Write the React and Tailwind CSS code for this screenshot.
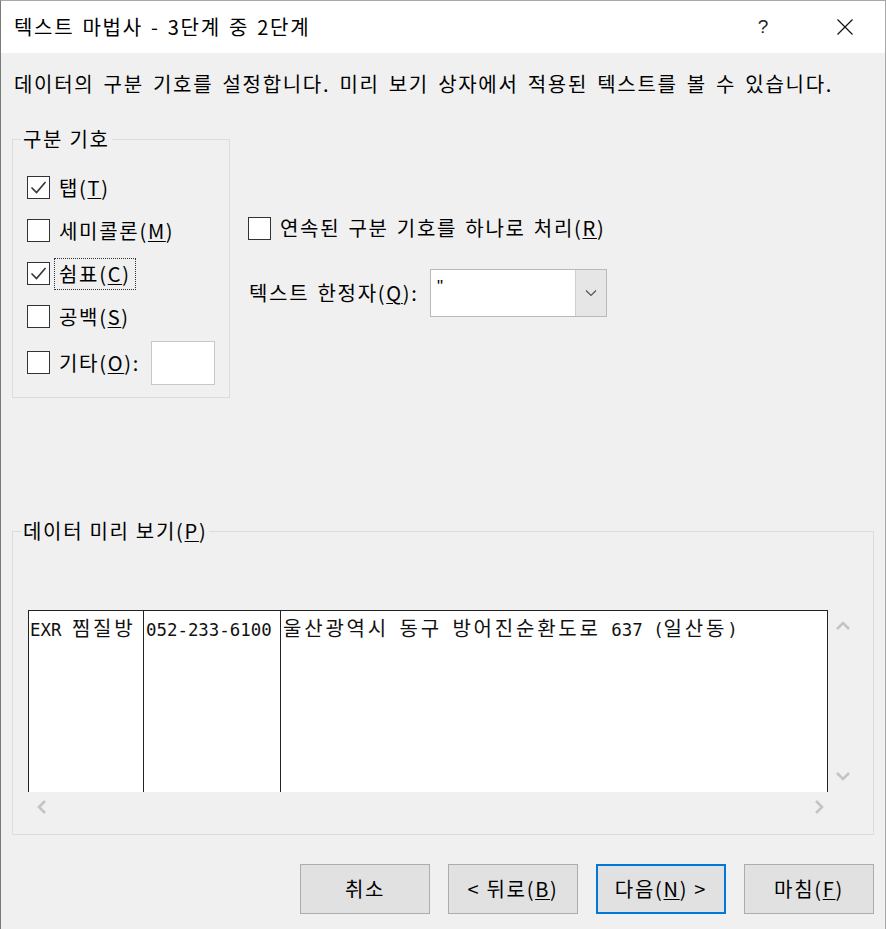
import React from 'react';

const Check = () => (
  <svg width="21" height="21" viewBox="0 0 21 21" className="block">
    <polyline points="3.5,10.5 8.5,15.5 17.5,5" fill="none" stroke="#333" strokeWidth="1.6" />
  </svg>
);

function CheckBox({ checked }) {
  return (
    <div className="w-[23px] h-[23px] border border-[#333] bg-white flex items-center justify-center shrink-0">
      {checked && <Check />}
    </div>
  );
}

function Key({ children }) {
  return <span className="underline underline-offset-[2px] decoration-1">{children}</span>;
}

function Row({ checked, children, className = '' }) {
  return (
    <div className={`flex items-center gap-[9px] ${className}`}>
      <CheckBox checked={checked} />
      <div className="leading-[24px] whitespace-nowrap">{children}</div>
    </div>
  );
}

function Chevron({ dir }) {
  const paths = {
    up: 'M1 9 L7 3 L13 9',
    down: 'M1 3 L7 9 L13 3',
    left: 'M9 1 L3 7 L9 13',
    right: 'M3 1 L9 7 L3 13',
  };
  return (
    <svg width="14" height="14" viewBox="0 0 14 14" className="block">
      <path d={paths[dir]} fill="none" stroke="#c4c4c4" strokeWidth="2.6" />
    </svg>
  );
}

// preview cells use a fixed-pitch look: ascii half width, hangul full width
function Mono({ text }) {
  const parts = text.match(/[\uac00-\ud7a3]+|[^\uac00-\ud7a3]+/g) || [];
  return parts.map((p, i) =>
    /[\uac00-\ud7a3]/.test(p) ? (
      <span key={i} className="font-['Noto_Sans_CJK_KR',sans-serif] text-[20px] tracking-[2.8px]">{p}</span>
    ) : (
      <span key={i} className="font-['DejaVu_Sans_Mono',monospace] text-[17.4px] tracking-[0px] whitespace-pre">{p}</span>
    )
  );
}

export default function App() {
  return (
    <div className="w-[886px] h-[929px] bg-[#f0f0f0] border-t border-l border-r border-t-[#a8a8a8] border-l-[#7a7a7a] border-r-[#a8a8a8] font-['Noto_Sans_CJK_KR',sans-serif] text-[20px] tracking-[1.7px] text-black flex flex-col overflow-hidden">
      {/* title bar */}
      <div className="h-[52px] bg-white flex items-center shrink-0">
        <div className="pl-[13px] leading-[24px] whitespace-nowrap [word-spacing:2px]">텍스트 마법사 - 3단계 중 2단계</div>
        <div className="ml-auto w-[20px] text-center text-[19px] mr-[64px] font-['Liberation_Sans',sans-serif] text-[#222] tracking-normal">?</div>
        <svg width="16" height="16" viewBox="0 0 16 16" className="mr-[32px]">
          <path d="M0.5 0.5 L15.5 15.5 M15.5 0.5 L0.5 15.5" stroke="#111" strokeWidth="1.2" />
        </svg>
      </div>

      <div className="mt-[19px] pl-[13px] leading-[24px] h-[24px] whitespace-nowrap [word-spacing:3px]">
        데이터의 구분 기호를 설정합니다. 미리 보기 상자에서 적용된 텍스트를 볼 수 있습니다.
      </div>

      <div className="flex mt-[43px]">
        {/* 구분 기호 group */}
        <div className="relative ml-[11px] w-[218px] h-[259px] border border-[#dcdcdc] pl-[14px] pt-[26px]">
          <span className="absolute -top-[13px] left-[8px] px-[2px] leading-[24px] bg-[#f0f0f0] whitespace-nowrap">구분 기호</span>
          <Row checked className="h-[43px]">탭(<Key>T</Key>)</Row>
          <Row className="h-[43px]">세미콜론(<Key>M</Key>)</Row>
          <Row checked className="h-[43px]">
            <span className="outline outline-1 outline-dotted outline-[#333] outline-offset-[3px] inline-block leading-[24px] px-[1px] -ml-[1px]">쉼표(<Key>C</Key>)</span>
          </Row>
          <Row className="h-[43px]">공백(<Key>S</Key>)</Row>
          <div className="flex items-center mt-[3px] h-[43px]">
            <CheckBox />
            <div className="ml-[9px] leading-[24px] whitespace-nowrap">기타(<Key>O</Key>):</div>
            <div className="ml-auto mr-[14px] w-[64px] h-[44px] bg-white border border-[#c8c8c8]" />
          </div>
        </div>

        {/* right column */}
        <div className="ml-[18px] flex flex-col">
          <Row className="mt-[77px] h-[24px]">
            <span className="[word-spacing:2px]">연속된 구분 기호를 하나로 처리(<Key>R</Key>)</span>
          </Row>
          <div className="flex items-center mt-[29px] h-[48px]">
            <div className="w-[182px] pl-[1px] whitespace-nowrap leading-[24px] [word-spacing:2px]">텍스트 한정자(<Key>Q</Key>):</div>
            <div className="w-[177px] h-[48px] bg-white border border-[#b9b9b9] flex">
              <div className="flex-1 pl-[6px] pt-[7px] font-['Liberation_Sans',sans-serif] text-[17px] leading-[20px]">"</div>
              <div className="w-[31px] bg-[#e6e6e6] border-l border-[#cfcfcf] flex items-center justify-center">
                <svg width="12" height="8" viewBox="0 0 12 8">
                  <path d="M1 1.5 L6 6.5 L11 1.5" fill="none" stroke="#555" strokeWidth="1.2" />
                </svg>
              </div>
            </div>
          </div>
        </div>
      </div>

      {/* 데이터 미리 보기 group */}
      <div className="relative ml-[11px] mt-[133px] w-[862px] h-[304px] border border-[#dcdcdc] pl-[15px] pt-[78px]">
        <span className="absolute -top-[13px] left-[8px] px-[2px] leading-[24px] bg-[#f0f0f0] whitespace-nowrap">데이터 미리 보기(<Key>P</Key>)</span>
        <div className="flex">
          <div className="flex flex-col">
            <div className="w-[800px] h-[182px] bg-white border-t border-l border-r border-[#222] flex leading-[24px] whitespace-nowrap tracking-normal text-[#111]">
              <div className="w-[115px] border-r border-[#222] pl-[1px] pt-[5px] overflow-hidden"><Mono text="EXR 찜질방" /></div>
              <div className="w-[137px] border-r border-[#222] pl-[2px] pt-[5px] overflow-hidden"><Mono text="052-233-6100" /></div>
              <div className="flex-1 pl-[2px] pt-[5px]"><Mono text="울산광역시 동구 방어진순환도로 637 (일산동)" /></div>
            </div>
            <div className="h-[30px] flex items-center justify-between pl-[8px] pr-[1px]">
              <Chevron dir="left" />
              <Chevron dir="right" />
            </div>
          </div>
          <div className="w-[30px] h-[182px] flex flex-col items-center justify-between pt-[10px] pb-[8px]">
            <Chevron dir="up" />
            <Chevron dir="down" />
          </div>
        </div>
      </div>

      {/* buttons */}
      <div className="mt-[29px] flex justify-end gap-[18px] pr-[11px]">
        {[
          ['취소', null],
          ['< 뒤로(', 'B'],
          ['다음(', 'N'],
          ['마침(', 'F'],
        ].map(([label, key], i) => (
          <div
            key={i}
            className={`w-[130px] h-[50px] flex items-center justify-center whitespace-nowrap bg-[#e1e1e1] ${
              i === 2 ? 'border-2 border-[#0078d7]' : 'border border-[#adadad]'
            }`}
          >
            {label}
            {key && (
              <>
                <Key>{key}</Key>){i === 2 ? '\u00a0>' : ''}
              </>
            )}
          </div>
        ))}
      </div>
    </div>
  );
}
